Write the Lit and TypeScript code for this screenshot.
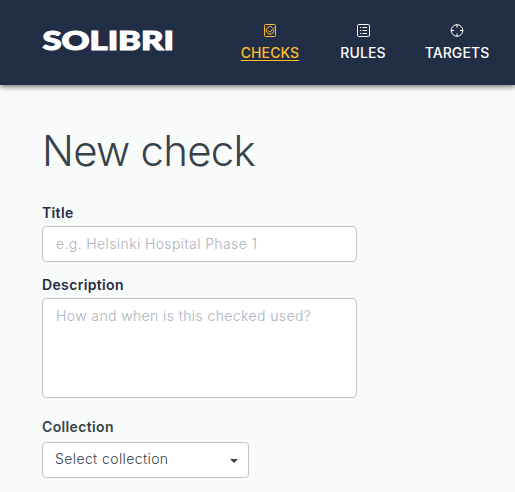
import { LitElement, html, svg, css } from "lit";
import { customElement } from "lit/decorators.js";

const icons = {
  checks: svg`<rect x="1.5" y="1.5" width="11" height="12" rx="1"/><path d="M10.8 6.6A3.8 3.8 0 1 1 9.2 4.2M5 7.3l2 2L11.5 4"/>`,
  rules: svg`<rect x="1.5" y="1.5" width="12" height="12" rx="1.3"/><path d="M6.5 4.5H11M6.5 7.5H11M6.5 10.5H11M4 4.5h1.2M4 7.5h1.2M4 10.5h1.2"/>`,
  targets: svg`<circle cx="7" cy="7.5" r="5.8"/><path d="M7 1.5v3M7 10.5v3M1 7.5h3M10 7.5h3"/>`,
};

@customElement("app-root")
export class AppRoot extends LitElement {
  static styles = css`
    :host { display: block; height: 492px; overflow: hidden; background: #f9fbfa; font-family: Inter, "Liberation Sans", sans-serif; color: #222e45; }
    * { box-sizing: border-box; }
    header { height: 85px; background: #222e45; box-shadow: 0 2px 5px rgba(0,0,0,.5); display: grid; grid-template-columns: 42px 174px 108px 78px 110px; }
    .logo { grid-column: 2; width: 134px; height: 40px; margin-top: 20px; display: block; overflow: visible; }
    .logo text { font: 900 27px Lato, sans-serif; fill: #fff; stroke: #fff; stroke-width: 1.2; }
    .item { display: flex; flex-direction: column; align-items: center; padding-top: 23px; color: #fff; font-size: 14px; font-weight: 500; line-height: 20px; letter-spacing: .1px; }
    .item svg { width: 15px; height: 15px; fill: none; stroke: currentColor; stroke-width: 1; margin-bottom: 5px; }
    .active { color: #fdbb2b; }
    .active span { text-decoration: underline; text-underline-offset: 2px; }
    main { padding: 40px 0 0 42px; display: flex; flex-direction: column; align-items: flex-start; }
    h1 { margin: 0 0 27px; font-size: 42px; line-height: 52px; font-weight: 300; letter-spacing: -.75px; color: #37424a; }
    label { font-size: 14px; line-height: 18px; font-weight: 600; letter-spacing: .35px; margin-bottom: 4px; }
    .input, .area, .select { display: block; font: 350 14px/20px Inter, sans-serif; border: 1px solid #c0c4ce; border-radius: 4px; background: #fff; letter-spacing: .39px; }
    .input { width: 315px; height: 36px; padding: 6px 13px 8px; margin-bottom: 14px; }
    .area { width: 315px; height: 100px; padding: 7px 13px; resize: none; margin-bottom: 20px; }
    ::placeholder { color: #adb1bd; opacity: 1; }
    .dark { color: #37424a; margin-bottom: 6px; }
    .select { display: flex; align-items: center; justify-content: space-between; width: 207px; height: 36px; padding: 0 10px 2px 12px; color: #37424a; }
    .arrow { width: 0; height: 0; margin-top: 3px; border: 4px solid transparent; border-top-color: currentColor; border-bottom: 0; }
  `;

  private item(name: string, icon: unknown, cls = "") {
    return html`<div class="item ${cls}"><svg viewBox="0 0 15 15">${icon}</svg><span>${name}</span></div>`;
  }

  render() {
    return html`
      <header>
        <svg class="logo" viewBox="0 0 134 40"><text x=".5" y="30" textLength="131.5" lengthAdjust="spacingAndGlyphs">SOLIBRI</text></svg>
        ${this.item("CHECKS", icons.checks, "active")}
        ${this.item("RULES", icons.rules)}
        ${this.item("TARGETS", icons.targets)}
      </header>
      <main>
        <h1>New check</h1>
        <label for="title">Title</label>
        <input class="input" id="title" placeholder="e.g. Helsinki Hospital Phase 1" />
        <label for="description">Description</label>
        <textarea class="area" id="description" placeholder="How and when is this checked used?"></textarea>
        <label class="dark">Collection</label>
        <div class="select" role="combobox"><span>Select collection</span><i class="arrow"></i></div>
      </main>`;
  }
}
